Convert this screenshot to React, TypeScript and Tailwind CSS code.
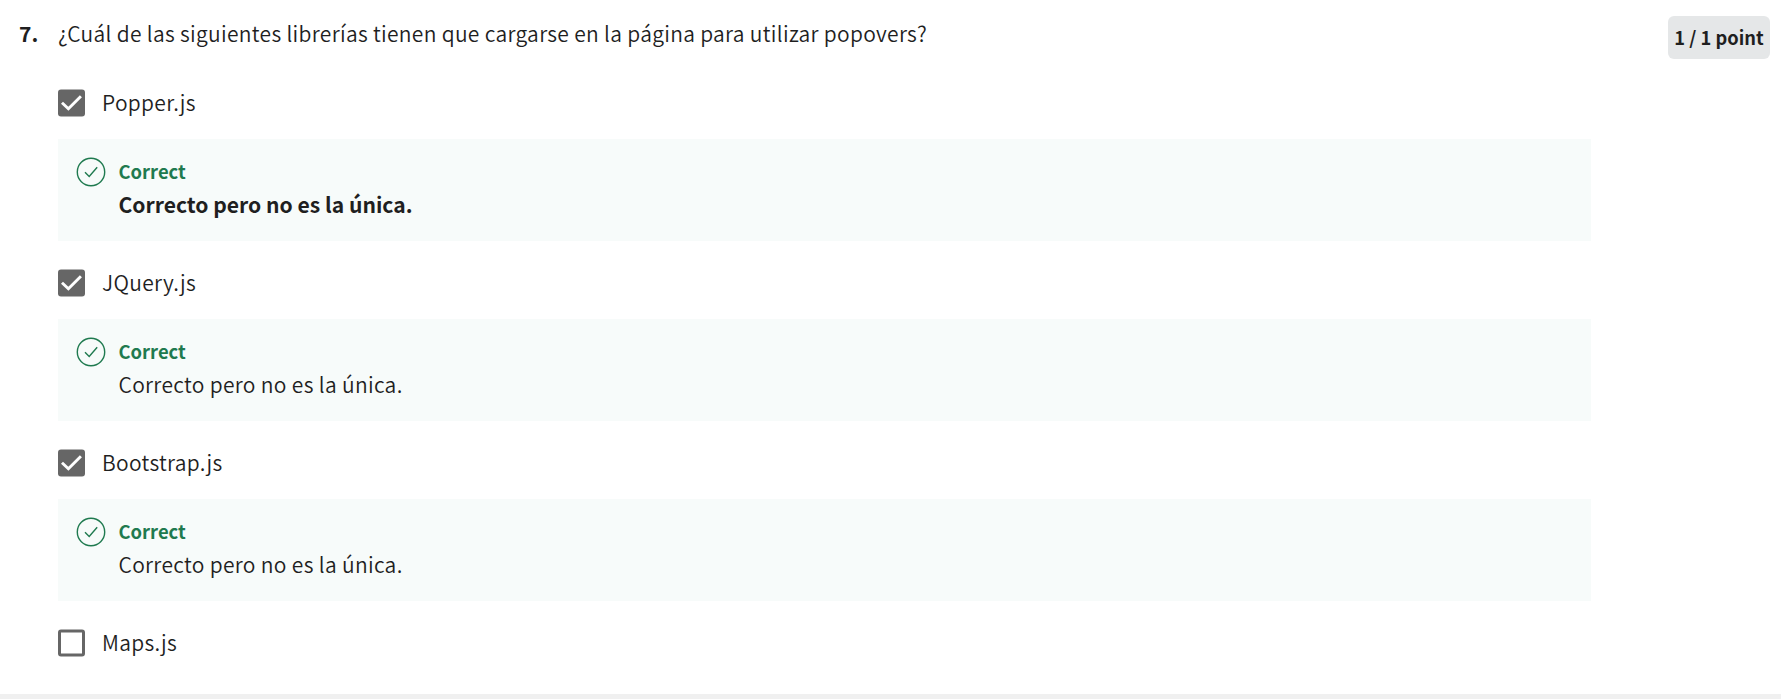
type Option = { label: string; checked: boolean; feedback?: string; bold?: boolean };

const options: Option[] = [
  { label: 'Popper.js', checked: true, feedback: 'Correcto pero no es la única.', bold: true },
  { label: 'JQuery.js', checked: true, feedback: 'Correcto pero no es la única.' },
  { label: 'Bootstrap.js', checked: true, feedback: 'Correcto pero no es la única.' },
  { label: 'Maps.js', checked: false },
];

function Checkbox({ checked }: { checked: boolean }) {
  return (
    <svg viewBox="0 0 27 28" className="h-[28px] w-[27px] shrink-0" fill="none">
      {checked ? (
        <>
          <rect y="0.4" width="27" height="27.2" rx="3" fill="#666666" />
          <path d="M4 13.7 L10.4 19.8 L22.9 7.3" stroke="#ffffff" strokeWidth="2.9" />
        </>
      ) : (
        <rect x="1.5" y="1.9" width="24" height="24.2" rx="1.5" stroke="#666666" strokeWidth="3" />
      )}
    </svg>
  );
}

function Feedback({ text, bold }: { text: string; bold?: boolean }) {
  return (
    <div className="mt-[22px] flex h-[102px] w-[1533px] bg-[#f7fbfa] pt-[17px] pl-[18px]">
      <svg viewBox="0 0 30 30" className="mt-px size-[30px] shrink-0" fill="none" stroke="#1f7a4f" strokeWidth="1.4">
        <circle cx="15" cy="15" r="13.7" />
        <path d="M9 15.3 L13.2 19.5 L21.2 10.3" />
      </svg>
      <div className="ml-[12.5px]">
        <p className="text-[18.4px] leading-[30px] font-bold text-[#1f7a4f]">Correct</p>
        <p className={bold ? 'text-[21.1px] leading-9 font-bold' : 'text-[21px] leading-9 font-[350] tracking-[0.32px]'}>{text}</p>
      </div>
    </div>
  );
}

export default function App() {
  return (
    <main className="flex h-[699px] flex-col bg-white font-['Noto_Sans_CJK_SC','Noto_Sans',sans-serif] text-[21px] text-[#1f1f1f]">
      <header className="flex h-[89px] shrink-0 items-start pl-[19px] pr-[11px]">
        <span className="mt-[15px] w-[39px] leading-9 font-bold">7.</span>
        <h1 className="mt-[15px] flex-1 leading-9 font-[350] tracking-[0.31px]">
          ¿Cuál de las siguientes librerías tienen que cargarse en la página para utilizar popovers?
        </h1>
        <span className="mt-4 flex h-[43px] w-[102px] items-center justify-center rounded-[6px] bg-[#e5e7e8] text-[18.3px] font-bold whitespace-nowrap">
          1 / 1 point
        </span>
      </header>
      <ul className="h-[605px] shrink-0 pl-[58px]">
        {options.map((option) => (
          <li key={option.label} className="h-[180px] last:h-auto">
            <label className="flex h-[28px] items-center gap-[17px]">
              <Checkbox checked={option.checked} />
              <span className="mb-px leading-[27px] font-[350] tracking-[0.32px]">{option.label}</span>
            </label>
            {option.feedback && <Feedback text={option.feedback} bold={option.bold} />}
          </li>
        ))}
      </ul>
      <footer className="h-[5px] shrink-0 bg-[#f0f0f0]" />
    </main>
  );
}
